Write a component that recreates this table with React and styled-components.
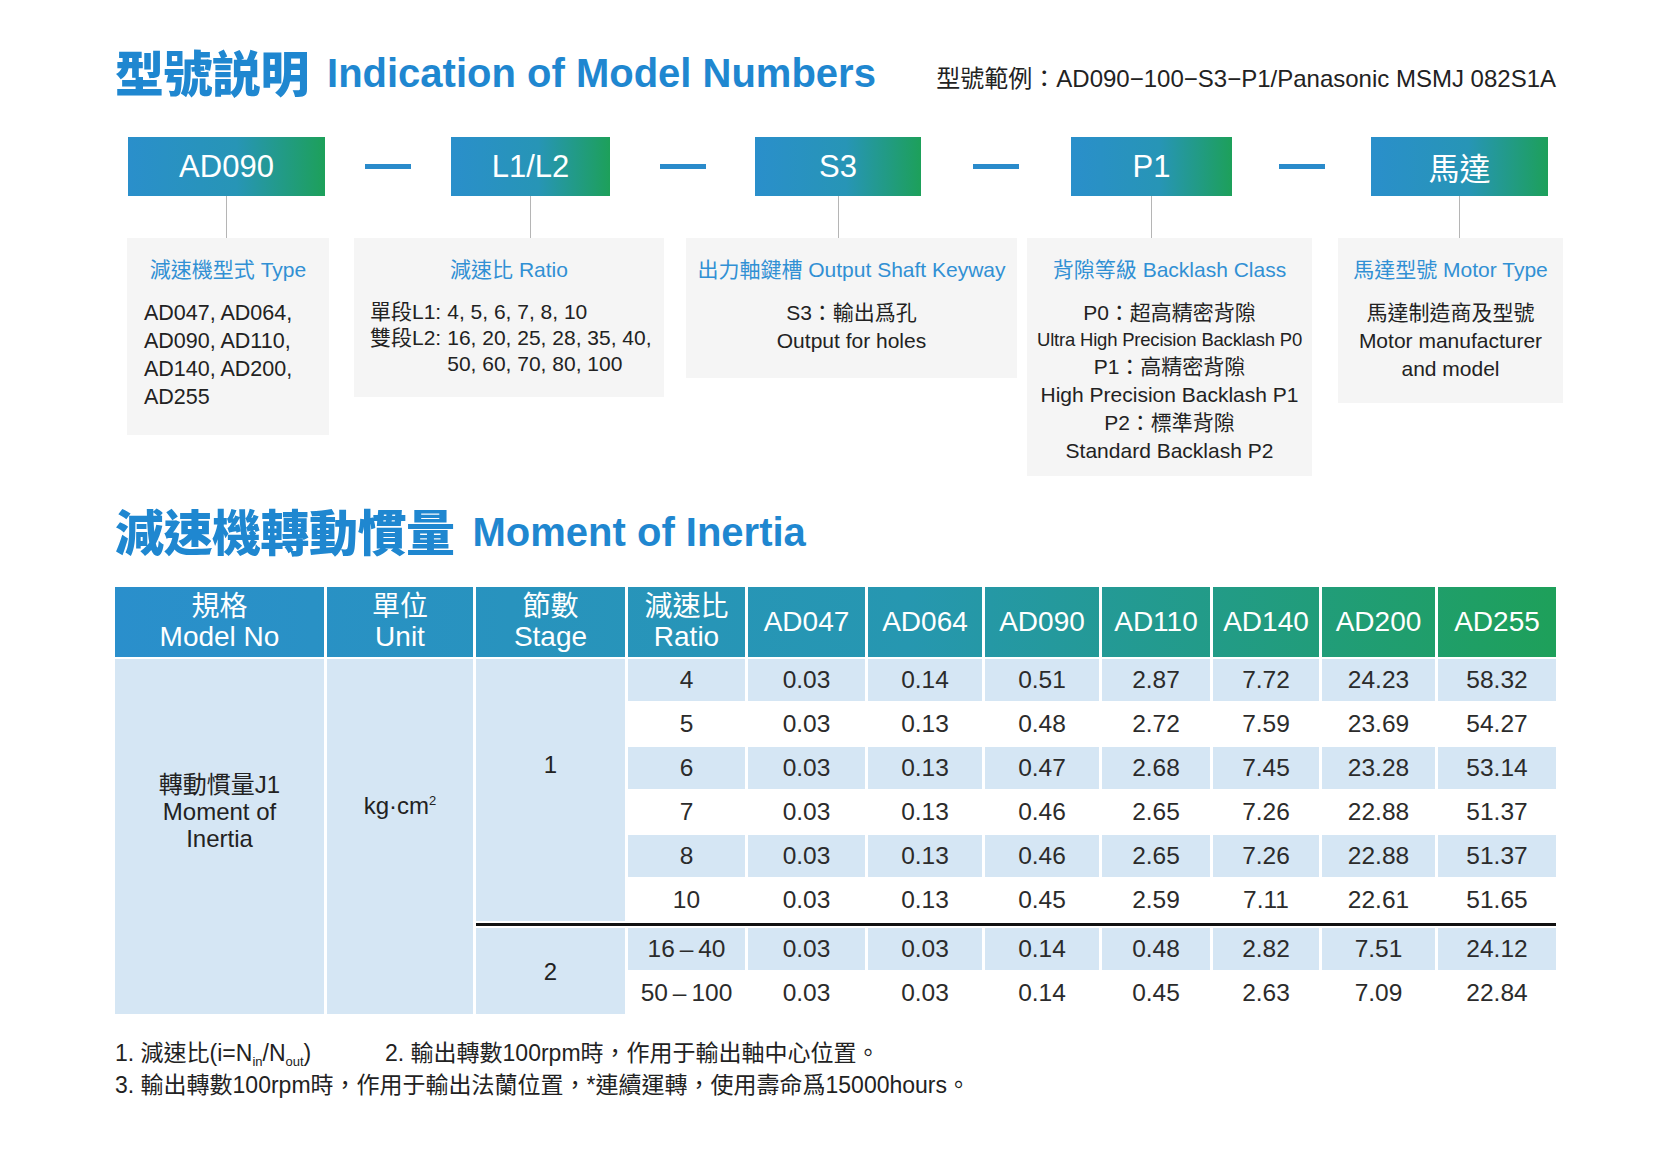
import React from 'react';
import styled, { createGlobalStyle } from 'styled-components';

const GlobalStyle = createGlobalStyle`
  html, body {
    margin: 0;
    padding: 0;
    background: #fff;
  }
  body {
    font-family: "Liberation Sans", "Noto Sans CJK TC", sans-serif;
    color: #222;
  }
`;

const BLUE = '#1f87d0';
const CELL_BLUE = '#d5e6f4';
const GRADIENT = 'linear-gradient(90deg, #2a8fcc 0%, #2697b0 55%, #1ea05a 100%)';

const Page = styled.div`
  width: 1677px;
  box-sizing: border-box;
  padding: 43px 121px 60px 115px;
`;

const TitleRow = styled.div`
  display: flex;
  justify-content: space-between;
  align-items: center;
  height: 56px;
`;

const Title = styled.h1`
  margin: 0;
  display: flex;
  align-items: center;
  gap: 18px;
  color: ${BLUE};
  font-size: 40px;
  font-weight: 700;
  line-height: 56px;
  white-space: nowrap;
`;

const TitleCjk = styled.span`
  font-family: "Noto Sans CJK TC", sans-serif;
  font-size: 49px;
  font-weight: 900;
  letter-spacing: -0.5px;
`;

const TitleEn = styled.span`
  padding-top: 4px;
`;

const Example = styled.div`
  font-size: 24px;
  color: #222;
  margin-top: 10px;
  white-space: nowrap;
`;

/* model number row */

const ModelRow = styled.div`
  display: grid;
  grid-template-columns: 197px 126px 159px 145px 166px 150px 161px 139px 177px;
  margin: 38px 0 0 13px;
  align-items: start;
`;

const TopUnit = styled.div`
  display: flex;
  flex-direction: column;
  align-items: center;
`;

const TopBox = styled.div`
  width: 100%;
  height: 59px;
  display: flex;
  align-items: center;
  justify-content: center;
  background: linear-gradient(90deg, #2a8fcb 0%, #2795b6 55%, #1da05a 100%);
  color: #fff;
  font-size: 31px;
`;

const Connector = styled.div`
  width: 1px;
  height: 42px;
  background: #b5b5b5;
`;

const DashCell = styled.div`
  height: 59px;
  display: flex;
  align-items: center;
  justify-content: center;
`;

const Dash = styled.div`
  width: 46px;
  height: 5px;
  background: #2a8bcb;
`;

const DescRow = styled.div`
  display: flex;
  align-items: flex-start;
  margin-left: 12px;
`;

const DescBox = styled.div`
  flex-shrink: 0;
  box-sizing: border-box;
  width: ${(p) => p.$w}px;
  margin-left: ${(p) => p.$ml || 0}px;
  padding: 18px ${(p) => (p.$left ? 14 : 4)}px ${(p) => p.$pb || 22}px;
  background: #f5f5f5;
  text-align: ${(p) => (p.$left ? 'left' : 'center')};
`;

const DescTitle = styled.div`
  color: #3190d4;
  font-size: 21px;
  line-height: 28px;
  text-align: center;
  white-space: nowrap;
  margin-bottom: 15px;
`;

const DescText = styled.div`
  font-size: ${(p) => p.$size || 21}px;
  line-height: 28px;
  color: #222;
  white-space: nowrap;
  padding-left: ${(p) => p.$indent || 0}px;
`;

const SmallLine = styled.div`
  font-size: 18.5px;
  line-height: 26px;
  white-space: nowrap;
  letter-spacing: -0.2px;
`;

const RatioGrid = styled.div`
  display: grid;
  grid-template-columns: auto 1fr;
  column-gap: 6px;
  font-size: 21px;
  line-height: 26px;
  padding-left: 2px;
  white-space: nowrap;
`;

/* inertia table */

const Section2 = styled(TitleRow)`
  margin-top: 26px;
`;

const COLS = [209, 146, 149, 117, 117, 114, 114, 108, 106, 113, 118];

const Table = styled.div`
  margin-top: 29px;
  width: 1441px;
`;

const HeadRow = styled.div`
  display: flex;
  height: 70px;
  background: ${GRADIENT};
`;

const HeadCell = styled.div`
  box-sizing: border-box;
  flex-shrink: 0;
  width: ${(p) => p.$w}px;
  border-left: ${(p) => (p.$first ? 'none' : '3px solid #fff')};
  display: flex;
  flex-direction: column;
  align-items: center;
  justify-content: center;
  color: #fff;
  font-size: 28px;
  line-height: 30px;
  text-align: center;
  white-space: nowrap;
`;

const Body = styled.div`
  display: grid;
  grid-template-columns: ${COLS.map((c) => `${c}px`).join(' ')};
  grid-template-rows: repeat(6, 42px) 3px 42px 42px;
  column-gap: 3px;
  row-gap: 2px;
  margin-top: 2px;
`;

const MergedCell = styled.div`
  grid-column: ${(p) => p.$col};
  grid-row: ${(p) => p.$rows};
  background: ${CELL_BLUE};
  display: flex;
  flex-direction: column;
  align-items: center;
  justify-content: center;
  padding-bottom: ${(p) => p.$pb || 0}px;
  font-size: 24px;
  line-height: 27px;
  color: #222;
  text-align: center;
`;

const Sup = styled.sup`
  font-size: 13px;
  vertical-align: 9px;
  line-height: 0;
`;

const Rule = styled.div`
  grid-column: 3 / -1;
  grid-row: 7;
  background: #111;
`;

const DataCell = styled.div`
  background: ${(p) => (p.$alt ? CELL_BLUE : '#fff')};
  display: flex;
  align-items: center;
  justify-content: center;
  font-size: 24.5px;
  color: #2b2b2b;
  white-space: nowrap;
`;

const Notes = styled.div`
  margin-top: 23px;
  font-size: 23px;
  line-height: 32px;
  color: #222;
`;

const NoteRow = styled.div`
  display: flex;
`;

const NoteItem = styled.span`
  width: ${(p) => (p.$w ? `${p.$w}px` : 'auto')};
  white-space: nowrap;
`;

const Sub = styled.sub`
  font-size: 13px;
  vertical-align: -5px;
  line-height: 0;
`;

const topBoxes = ['AD090', 'L1/L2', 'S3', 'P1', '馬達'];

const models = ['AD047', 'AD064', 'AD090', 'AD110', 'AD140', 'AD200', 'AD255'];

const rows = [
  { ratio: '4', v: ['0.03', '0.14', '0.51', '2.87', '7.72', '24.23', '58.32'] },
  { ratio: '5', v: ['0.03', '0.13', '0.48', '2.72', '7.59', '23.69', '54.27'] },
  { ratio: '6', v: ['0.03', '0.13', '0.47', '2.68', '7.45', '23.28', '53.14'] },
  { ratio: '7', v: ['0.03', '0.13', '0.46', '2.65', '7.26', '22.88', '51.37'] },
  { ratio: '8', v: ['0.03', '0.13', '0.46', '2.65', '7.26', '22.88', '51.37'] },
  { ratio: '10', v: ['0.03', '0.13', '0.45', '2.59', '7.11', '22.61', '51.65'] },
  { ratio: '16\u2009–\u200940', v: ['0.03', '0.03', '0.14', '0.48', '2.82', '7.51', '24.12'] },
  { ratio: '50\u2009–\u2009100', v: ['0.03', '0.03', '0.14', '0.45', '2.63', '7.09', '22.84'] },
];

const heads = [
  ['規格', 'Model No'],
  ['單位', 'Unit'],
  ['節數', 'Stage'],
  ['減速比', 'Ratio'],
  ...models.map((m) => [m]),
];

const App = () => {
  return (
    <Page>
      <GlobalStyle />
      <TitleRow>
        <Title>
          <TitleCjk>型號説明</TitleCjk>
          <TitleEn>Indication of Model Numbers</TitleEn>
        </Title>
        <Example>型號範例：AD090−100−S3−P1/Panasonic MSMJ 082S1A</Example>
      </TitleRow>

      <ModelRow>
        {topBoxes.map((label, i) => (
          <React.Fragment key={label}>
            {i > 0 && (
              <DashCell>
                <Dash />
              </DashCell>
            )}
            <TopUnit>
              <TopBox>{label}</TopBox>
              <Connector />
            </TopUnit>
          </React.Fragment>
        ))}
      </ModelRow>

      <DescRow>
        <DescBox $w={202} $left $pb={24}>
          <DescTitle>減速機型式 Type</DescTitle>
          <DescText $indent={3} $size={21.5}>
            AD047, AD064,<br />
            AD090, AD110,<br />
            AD140, AD200,<br />
            AD255
          </DescText>
        </DescBox>
        <DescBox $w={310} $ml={25} $left $pb={20}>
          <DescTitle>減速比 Ratio</DescTitle>
          <RatioGrid>
            <span>單段L1:</span>
            <span>4, 5, 6, 7, 8, 10</span>
            <span>雙段L2:</span>
            <span>16, 20, 25, 28, 35, 40,<br />50, 60, 70, 80, 100</span>
          </RatioGrid>
        </DescBox>
        <DescBox $w={331} $ml={22} $pb={23}>
          <DescTitle>出力軸鍵槽 Output Shaft Keyway</DescTitle>
          <DescText>
            S3：輸出爲孔<br />
            Output for holes
          </DescText>
        </DescBox>
        <DescBox $w={285} $ml={10} $pb={11}>
          <DescTitle>背隙等級 Backlash Class</DescTitle>
          <DescText>P0：超高精密背隙</DescText>
          <SmallLine>Ultra High Precision Backlash P0</SmallLine>
          <DescText>
            P1：高精密背隙<br />
            High Precision Backlash P1<br />
            P2：標準背隙<br />
            Standard Backlash P2
          </DescText>
        </DescBox>
        <DescBox $w={225} $ml={26} $pb={20}>
          <DescTitle>馬達型號 Motor Type</DescTitle>
          <DescText>
            馬達制造商及型號<br />
            Motor manufacturer<br />
            and model
          </DescText>
        </DescBox>
      </DescRow>

      <Section2>
        <Title>
          <TitleCjk>減速機轉動慣量</TitleCjk>
          <TitleEn>Moment of Inertia</TitleEn>
        </Title>
      </Section2>

      <Table>
        <HeadRow>
          {heads.map((h, i) => (
            <HeadCell key={i} $w={i === 0 ? COLS[0] : COLS[i] + 3} $first={i === 0}>
              {h.map((line) => (
                <span key={line}>{line}</span>
              ))}
            </HeadCell>
          ))}
        </HeadRow>
        <Body>
          <MergedCell $col="1" $rows="1 / 10" $pb={50}>
            <span>轉動慣量J1</span>
            <span>Moment of</span>
            <span>Inertia</span>
          </MergedCell>
          <MergedCell $col="2" $rows="1 / 10" $pb={62}>
            <span>
              kg·cm<Sup>2</Sup>
            </span>
          </MergedCell>
          <MergedCell $col="3" $rows="1 / 7" $pb={52}>
            1
          </MergedCell>
          <Rule />
          <MergedCell $col="3" $rows="8 / 10">
            2
          </MergedCell>
          {rows.map((r, ri) =>
            [r.ratio, ...r.v].map((val, ci) => (
              <DataCell key={`${ri}-${ci}`} $alt={ri % 2 === 0}>
                {val}
              </DataCell>
            ))
          )}
        </Body>
      </Table>

      <Notes>
        <NoteRow>
          <NoteItem $w={270}>
            1. 減速比(i=N<Sub>in</Sub>/N<Sub>out</Sub>)
          </NoteItem>
          <NoteItem>2. 輸出轉數100rpm時，作用于輸出軸中心位置。</NoteItem>
        </NoteRow>
        <NoteRow>
          <NoteItem>3. 輸出轉數100rpm時，作用于輸出法蘭位置，*連續運轉，使用壽命爲15000hours。</NoteItem>
        </NoteRow>
      </Notes>
    </Page>
  );
};

export default App;
